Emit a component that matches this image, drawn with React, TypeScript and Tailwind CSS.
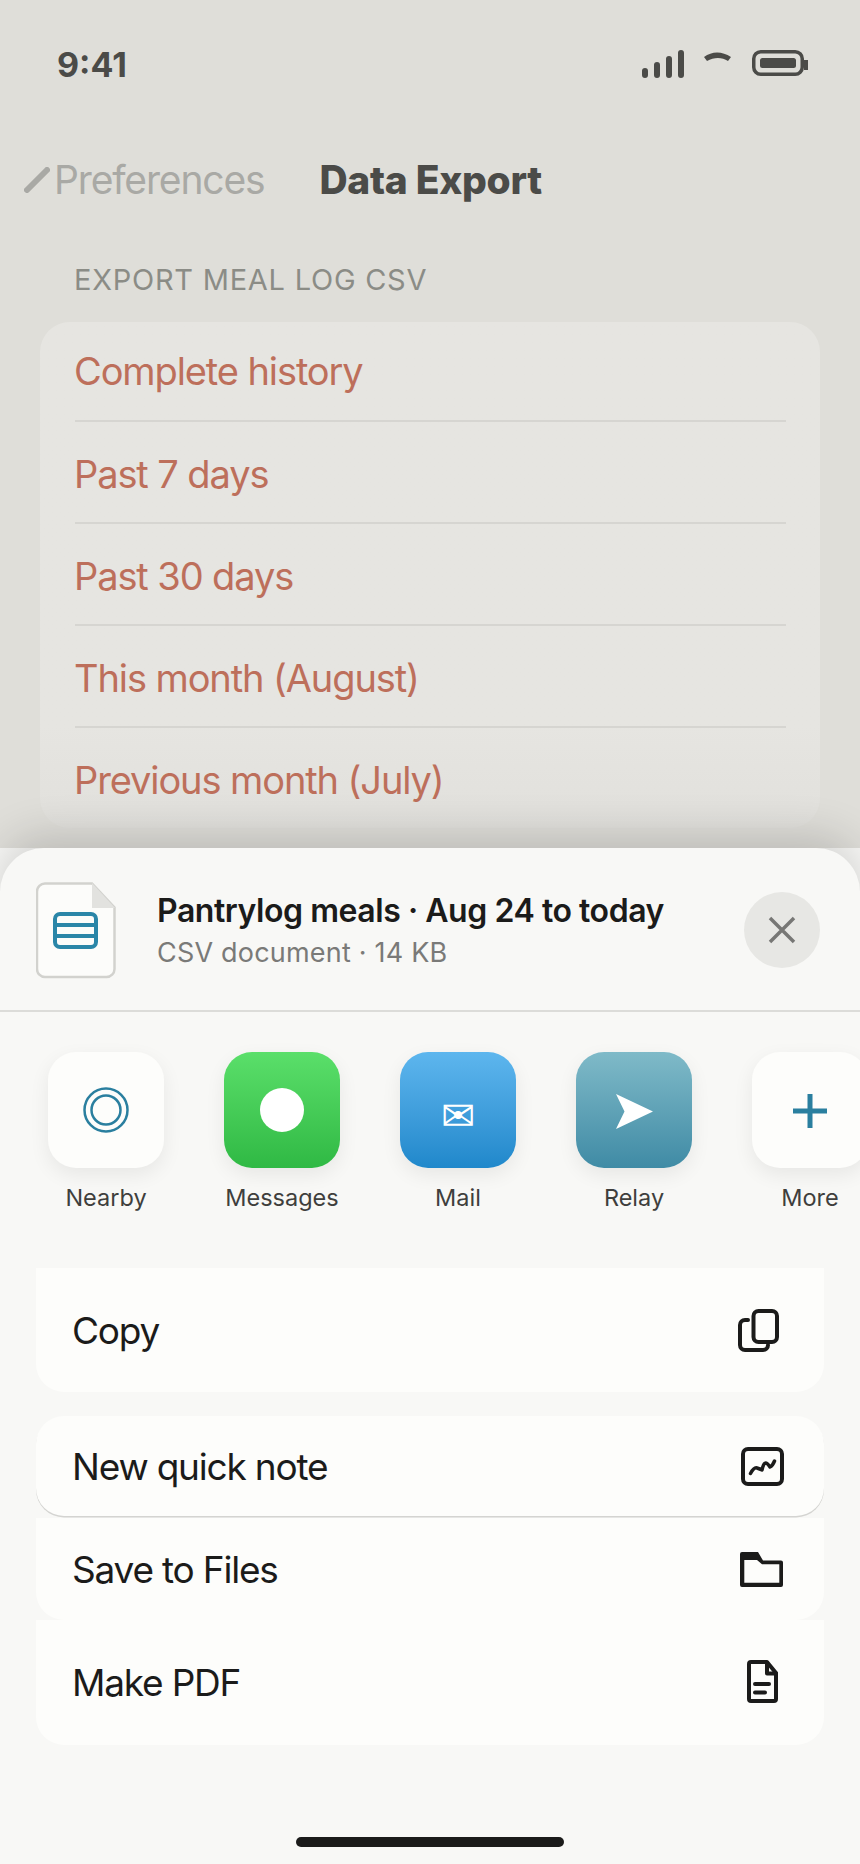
import React from "react";

function Signal() {
  return (
    <svg width="170" height="36" viewBox="0 0 170 36" className="block">
      <g fill="none" stroke="#4b4b48" strokeWidth="6" strokeLinecap="round">
        <path d="M5 25v4M17 19v10M29 13v16M41 7v22" />
      </g>
      <path d="M64 11c8-6 18-6 27 0l-3 4c-6-4-14-4-21 0z" fill="#4b4b48" />
      <rect x="113.750" y="5.750" width="48.500" height="22.500" rx="7" fill="none" stroke="#4b4b48" strokeWidth="3.500" />
      <rect x="120" y="12" width="36" height="10" rx="2.500" fill="#4b4b48" />
      <rect x="164" y="14" width="4" height="10" fill="#4b4b48" />
    </svg>
  );
}

const rows = ["Complete history", "Past 7 days", "Past 30 days", "This month (August)", "Previous month (July)"];

function AppTile({ name, bg, children }: { name: string; bg: string; children: React.ReactNode }) {
  return (
    <div className="flex w-[116px] shrink-0 flex-col items-center">
      <div className={`flex h-[116px] w-[116px] items-center justify-center rounded-[28px] shadow-[0_7px_20px_rgba(0,0,0,0.07)] ${bg}`}>
        {children}
      </div>
      <div className="mt-[15px] text-[23.5px] leading-[30px] whitespace-nowrap text-[#3f3f3d]">{name}</div>
    </div>
  );
}

function CopyIcon() {
  return (
    <svg width="41" height="43" viewBox="0 0 41 43" fill="none" stroke="#1b1b1a" strokeWidth="4" strokeLinecap="round" strokeLinejoin="round">
      <rect x="15.500" y="2" width="23.500" height="31" rx="5" />
      <path d="M10 11H7a5 5 0 0 0-5 5v20a5 5 0 0 0 5 5h18a5 5 0 0 0 5-5" />
    </svg>
  );
}
function ChartIcon() {
  return (
    <svg width="43" height="39" viewBox="0 0 43 39" className="ml-[3px]" fill="none" stroke="#1b1b1a" strokeWidth="4" strokeLinecap="round" strokeLinejoin="round">
      <rect x="2" y="2" width="39" height="35" rx="5" />
      <path d="M9.500 26.500Q13 20 16 21T21 23Q22.500 16 24.500 16T29 20Q31.500 19 33.500 14" strokeWidth="3.500" />
    </svg>
  );
}
function FolderIcon() {
  return (
    <svg width="43" height="35" viewBox="0 0 43 35" className="ml-[2px]">
      <path
        fillRule="evenodd"
        fill="#1b1b1a"
        d="M0 2a2 2 0 0 1 2-2h16l5 8.500h18a2 2 0 0 1 2 2V33a2 2 0 0 1-2 2H2a2 2 0 0 1-2-2zM4.300 8v22.700h35V12.300H22L17 8z"
      />
    </svg>
  );
}
function DocIcon() {
  return (
    <svg width="32" height="43" viewBox="0 0 32 43" className="mb-[2px] ml-[9px]" fill="none" stroke="#1b1b1a" strokeWidth="4" strokeLinejoin="round" strokeLinecap="round">
      <path d="M2 4a2 2 0 0 1 2-2h16l9 11v26a2 2 0 0 1-2 2H4a2 2 0 0 1-2-2z" />
      <path d="M20 3v10.500h9" />
      <path d="M8 24h14M8 32.500h10" />
    </svg>
  );
}

function Row({ label, icon, className, textClass }: { label: string; icon: React.ReactNode; className: string; textClass: string }) {
  return (
    <div className={`flex items-center justify-between bg-[#fdfdfb] pr-[40px] pl-[36px] ${className}`}>
      <span className={`text-[37px] tracking-[-1.2px] text-[#1b1b1a] ${textClass}`}>{label}</span>
      <span className="flex w-[46px] justify-start">{icon}</span>
    </div>
  );
}

export default function App() {
  return (
    <div className="flex h-[1864px] w-[860px] flex-col overflow-hidden bg-[#f8f8f6] font-['Inter',sans-serif]">
      <div className="h-[848px] shrink-0 overflow-hidden bg-[#dfded9]">
        <div className="flex h-[126px] items-center justify-between pt-[2px] pr-[50px] pl-[57px]">
          <span className="text-[34px] font-bold text-[#4b4b48]">9:41</span>
          <Signal />
        </div>
        <div className="flex h-[108px] items-center pl-[24px]">
          <svg width="26" height="26" viewBox="0 0 26 26" className="shrink-0">
            <path d="M3 23L23 3" stroke="#a9a9a5" strokeWidth="6" strokeLinecap="round" />
          </svg>
          <span className="ml-[4px] text-[39px] tracking-[-1.15px] text-[#a9a9a5]">Preferences</span>
          <span className="ml-[55px] text-[39px] font-extrabold tracking-[-0.3px] text-[#4b4b48]">Data Export</span>
        </div>
        <div className="mt-[29px] pl-[74px] text-[29px] leading-[34px] tracking-[0.75px] text-[#8b8c86]">EXPORT MEAL LOG CSV</div>
        <div className="mx-[40px] mt-[25px] rounded-[30px] bg-gradient-to-b from-[#e6e5e1] from-80% to-[#e1e0dc] pr-[34px] pl-[35px]">
          {rows.map((r, i) => (
            <div
              key={r}
              className={`flex items-center text-[38px] tracking-[-1.1px] text-[#bd6f5b] ${i === 4 ? "h-[100px] pt-[4px]" : i === 0 ? "h-[100px] border-b-2 border-[#d6d5d1]" : "h-[102px] border-b-2 border-[#d6d5d1] pt-[4px]"}`}
            >
              <span className="-ml-[1px]">{r}</span>
            </div>
          ))}
        </div>
      </div>

      <div className="relative flex-1 rounded-t-[44px] bg-[#f8f8f6] shadow-[0_-12px_44px_rgba(0,0,0,0.16)]">
        <div className="flex h-[164px] items-center border-b-2 border-[#dcdcd9] pl-[36px] pr-[40px]">
          <svg width="80" height="97" viewBox="0 0 80 97" className="mt-[2px] shrink-0">
            <path d="M9 1.500h47l22.500 24V87a8 8 0 0 1-8 8H9a8 8 0 0 1-8-8V9.500a8 8 0 0 1 8-8z" fill="#fcfcfa" stroke="#d2d2ce" strokeWidth="2.500" />
            <path d="M56 1l23 25H56z" fill="#e2e2df" />
            <rect x="19" y="32" width="41" height="33" rx="5" fill="none" stroke="#2a86a8" strokeWidth="4" />
            <path d="M19 43h41M19 54h41" stroke="#2a86a8" strokeWidth="4" />
          </svg>
          <div className="ml-[41px] flex-1 pt-[4px]">
            <div className="text-[32px] leading-[38px] font-semibold tracking-[-0.45px] text-[#1b1b1a]">Pantrylog meals · Aug 24 to today</div>
            <div className="mt-[6px] text-[27px] leading-[34px] tracking-[0.2px] text-[#7a7a78]">CSV document · 14 KB</div>
          </div>
          <div className="mt-[2px] flex h-[76px] w-[76px] shrink-0 items-center justify-center rounded-full bg-[#e7e7e4]">
            <svg width="28" height="28" viewBox="0 0 28 28">
              <path d="M2 2l24 24M26 2L2 26" stroke="#777775" strokeWidth="3.500" />
            </svg>
          </div>
        </div>

        <div className="flex gap-[60px] pt-[40px] pl-[48px]">
          <AppTile name="Nearby" bg="bg-[#fdfdfb]">
            <svg width="48" height="48" viewBox="0 0 48 48" fill="none" stroke="#2a7f9f" strokeWidth="2.500">
              <circle cx="24" cy="24" r="21.500" />
              <circle cx="24" cy="24" r="14.500" />
            </svg>
          </AppTile>
          <AppTile name="Messages" bg="bg-gradient-to-b from-[#5adf6a] to-[#2fb944]">
            <div className="h-[44px] w-[44px] rounded-full bg-white" />
          </AppTile>
          <AppTile name="Mail" bg="bg-gradient-to-b from-[#5db6ee] to-[#1f88cb]">
            <span className="pt-[12px] font-['DejaVu_Sans'] text-[41px] leading-none font-bold text-white">✉</span>
          </AppTile>
          <AppTile name="Relay" bg="bg-gradient-to-b from-[#7fbac8] to-[#3f8ba5]">
            <svg width="37" height="35" viewBox="0 0 37 35" className="mt-[2px]">
              <path d="M0 0L37 17.500L0 35L8.500 17.500z" fill="#fff" />
            </svg>
          </AppTile>
          <AppTile name="More" bg="bg-[#fdfdfb]">
            <svg width="34" height="34" viewBox="0 0 34 34" className="mt-[2px]">
              <path d="M17 0v34M0 17h34" stroke="#2a7f9f" strokeWidth="5" />
            </svg>
          </AppTile>
        </div>

        <div className="mx-[36px] mt-[55px]">
          <Row label="Copy" icon={<CopyIcon />} textClass="pt-[2px]" className="h-[124px] rounded-b-[28px]" />
          <Row label="New quick note" icon={<ChartIcon />} textClass="pt-[2px]" className="mt-[24px] h-[100px] rounded-[28px] shadow-[0_1.500px_0_#d4d4d1]" />
          <Row label="Save to Files" icon={<FolderIcon />} textClass="pt-[2px]" className="mt-[2px] h-[102px] rounded-b-[28px]" />
          <Row label="Make PDF" icon={<DocIcon />} textClass="" className="h-[125px] rounded-b-[28px]" />
        </div>

        <div className="mx-auto mt-[92px] h-[10px] w-[268px] rounded-full bg-[#1b1b1a]" />
      </div>
    </div>
  );
}
